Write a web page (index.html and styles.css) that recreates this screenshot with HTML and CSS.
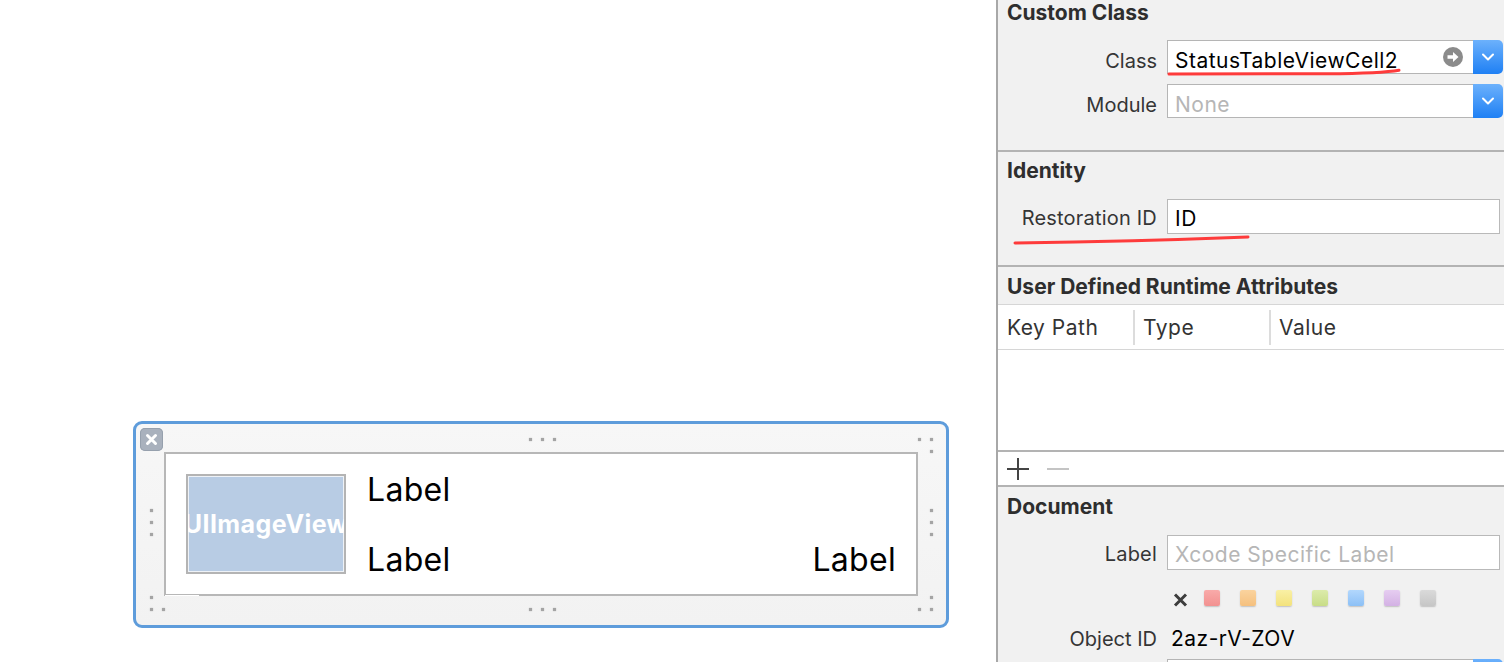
FILE: index.html
```html
<!DOCTYPE html>
<html>
<head>
<meta charset="utf-8">
<title>Xcode Identity Inspector</title>
<link rel="stylesheet" href="styles.css">
</head>
<body>
<div class="app">
  <main class="canvas">
    <div class="cell">
      <div class="close-btn">
        <svg width="23" height="23" viewBox="0 0 23 23"><path d="M7.5 7.5 L15.5 15.5 M15.5 7.5 L7.5 15.5" stroke="#fff" stroke-width="3" stroke-linecap="round"/></svg>
      </div>
      <div class="handle h-row h-top"><i></i><i></i><i></i></div>
      <div class="handle h-row h-bottom"><i></i><i></i><i></i></div>
      <div class="handle h-col h-left"><i></i><i></i><i></i></div>
      <div class="handle h-col h-right"><i></i><i></i><i></i></div>
      <div class="handle h-grid c-tr"><i></i><i></i><i class="off"></i><i></i></div>
      <div class="handle h-grid c-br"><i class="off"></i><i></i><i></i><i></i></div>
      <div class="handle h-grid c-bl"><i></i><i class="off"></i><i></i><i></i></div>
      <div class="content-view">
        <div class="image-view"><span>UIImageView</span></div>
        <div class="labels">
          <span class="lbl">Label</span><span></span>
          <span class="lbl">Label</span><span class="lbl lbl-right">Label</span>
        </div>
      </div>
    </div>
  </main>
  <div class="divider"></div>
  <aside class="inspector">
    <section class="sec sec-custom">
      <h2 class="sec-title">Custom Class</h2>
      <div class="row row-popup row-first">
        <span class="row-label">Class</span>
        <div class="popup">
          <div class="popup-field">
            <span class="val">StatusTableViewCell2</span>
            <svg class="go-icon" width="20" height="20" viewBox="0 0 20 20"><circle cx="10" cy="10" r="10" fill="#8b8b8b"/><path d="M4.5 8.3 H10 V5 L15.5 10 L10 15 V11.7 H4.5 Z" fill="#fff"/></svg>
          </div>
          <div class="popup-btn"><svg width="12" height="8" viewBox="0 0 12 8"><path d="M1 1.5 L6 6.5 L11 1.5" fill="none" stroke="#fff" stroke-width="2" stroke-linecap="round" stroke-linejoin="round"/></svg></div>
        </div>
      </div>
      <div class="row row-popup row-next">
        <span class="row-label">Module</span>
        <div class="popup">
          <div class="popup-field"><span class="placeholder">None</span></div>
          <div class="popup-btn"><svg width="12" height="8" viewBox="0 0 12 8"><path d="M1 1.5 L6 6.5 L11 1.5" fill="none" stroke="#fff" stroke-width="2" stroke-linecap="round" stroke-linejoin="round"/></svg></div>
        </div>
      </div>
      <svg class="mark mark-class" width="240" height="10" viewBox="0 0 240 10"><path d="M2 6 L160 5.8 Q215 5.2 232 2.2" fill="none" stroke="#fe3b3b" stroke-width="3" stroke-linecap="round"/></svg>
    </section>

    <section class="sec sec-identity">
      <h2 class="sec-title">Identity</h2>
      <div class="row row-text row-first-id">
        <span class="row-label">Restoration ID</span>
        <div class="textfield"><span class="val">ID</span></div>
      </div>
      <svg class="mark mark-id" width="240" height="12" viewBox="0 0 240 12"><path d="M2 9 Q120 7.5 235 3" fill="none" stroke="#fe3b3b" stroke-width="3" stroke-linecap="round"/></svg>
    </section>

    <section class="sec sec-udra">
      <div class="udra-head"><h2 class="sec-title">User Defined Runtime Attributes</h2></div>
      <div class="table-head">
        <div class="th">Key Path</div>
        <div class="th">Type</div>
        <div class="th">Value</div>
      </div>
      <div class="table-body"></div>
      <div class="table-bar">
        <svg width="22" height="22" viewBox="0 0 22 22"><path d="M11 0 V22 M0 11 H22" stroke="#444" stroke-width="2"/></svg>
        <svg width="22" height="22" viewBox="0 0 22 22"><path d="M0 11 H22" stroke="#c4c4c4" stroke-width="2"/></svg>
      </div>
    </section>

    <section class="sec sec-doc">
      <h2 class="sec-title">Document</h2>
      <div class="row row-text row-first-id">
        <span class="row-label">Label</span>
        <div class="textfield"><span class="placeholder">Xcode Specific Label</span></div>
      </div>
      <div class="row row-swatch">
        <span></span>
        <div class="swatches">
          <svg class="swatch-x" width="15" height="14" viewBox="0 0 15 14"><path d="M2 1.5 L13 12.5 M13 1.5 L2 12.5" stroke="#3d3d3d" stroke-width="3"/></svg>
          <i class="sw sw-red"></i>
          <i class="sw sw-orange"></i>
          <i class="sw sw-yellow"></i>
          <i class="sw sw-green"></i>
          <i class="sw sw-blue"></i>
          <i class="sw sw-purple"></i>
          <i class="sw sw-gray"></i>
        </div>
      </div>
      <div class="row row-obj">
        <span class="row-label">Object ID</span>
        <span class="obj-val">2az-rV-ZOV</span>
      </div>
      <div class="row row-lock">
        <span></span>
        <div class="popup">
          <div class="popup-field"></div>
          <div class="popup-btn"></div>
        </div>
      </div>
    </section>
  </aside>
</div>
</body>
</html>
```

FILE: styles.css
```css
* { box-sizing: border-box; margin: 0; padding: 0; }

html, body {
  width: 1504px;
  height: 662px;
  overflow: hidden;
  background: #ffffff;
  font-family: "Inter", "Liberation Sans", sans-serif;
}

.app {
  display: flex;
  width: 1504px;
  height: 662px;
}

/* ---------- canvas ---------- */
.canvas {
  width: 996px;
  flex: none;
  background: #ffffff;
  padding: 421px 0 0 133px;
}

.cell {
  position: relative;
  width: 816px;
  height: 207px;
  border: 3px solid #5e9cdb;
  border-radius: 9px;
  background: linear-gradient(#f7f7f7, #f2f2f2);
  padding: 28px 28px 29px 28px;
}

.close-btn {
  position: absolute;
  left: 4px;
  top: 4px;
  width: 23px;
  height: 23px;
  border-radius: 5px;
  background: #a9b1bd;
  box-shadow: inset 0 0 0 1px #96a0ad;
  display: flex;
}

.handle { position: absolute; display: flex; gap: 9px; }
.handle i {
  display: block;
  width: 3px;
  height: 3px;
  background: #a4a4a4;
  box-shadow: 0 0 1.5px rgba(0,0,0,0.25);
}
.handle i.off { visibility: hidden; }
.h-row { flex-direction: row; }
.h-col { flex-direction: column; }
.h-grid { display: grid; grid-template-columns: 3px 3px; gap: 9px; }

.h-top { left: 393px; top: 14px; }
.h-bottom { left: 393px; top: 184px; }
.h-left { left: 14px; top: 85px; }
.h-right { left: 794px; top: 85px; }
.c-tr { left: 782px; top: 14px; }
.c-br { left: 782px; top: 172px; }
.c-bl { left: 14px; top: 172px; }

.content-view {
  position: relative;
  width: 100%;
  height: 100%;
  background: #ffffff;
  border: 2px solid #b7b7b7;
  display: flex;
  align-items: flex-start;
  padding: 16px 21px 0 20px;
}
.content-view::after {
  content: "";
  position: absolute;
  left: -1px;
  bottom: -2px;
  width: 34px;
  height: 1px;
  background: #ffffff;
}

.image-view {
  flex: none;
  margin-top: 4px;
  width: 160px;
  height: 100px;
  border: 2px solid #b4b4b4;
  box-shadow: inset 0 0 0 1px #eef2f7;
  background: #b8cce4;
  overflow: hidden;
  display: flex;
  align-items: center;
  justify-content: center;
}
.image-view span {
  color: #ffffff;
  font-weight: 700;
  font-size: 25px;
  letter-spacing: 0.4px;
  white-space: nowrap;
}

.labels {
  flex: 1;
  margin-left: 21px;
  display: grid;
  grid-template-columns: 1fr auto;
  row-gap: 30px;
  line-height: 40px;
}
.lbl {
  font-size: 32px;
  color: #000000;
  letter-spacing: 0.3px;
}
.lbl-right { margin-right: -1px; }

.divider {
  width: 2px;
  flex: none;
  background: #a8a8a8;
}

/* ---------- inspector ---------- */
.inspector {
  position: relative;
  flex: 1;
  background: #f1f1f1;
  color: #333333;
}

.sec {
  position: relative;
  border-bottom: 2px solid #b3b3b3;
}

.sec-title {
  font-size: 21px;
  font-weight: 700;
  line-height: 26px;
  color: #2e2e2e;
  padding-left: 9px;
}

.sec-custom { height: 152px; }
.sec-identity { height: 115px; padding-top: 6px; }
.sec-udra { height: 220px; }
.sec-doc { border-bottom: none; padding-top: 7px; height: 175px; }

.row {
  display: grid;
  grid-template-columns: 159px 1fr;
  column-gap: 10px;
  align-items: center;
}
.row-label {
  text-align: right;
  font-size: 20px;
  color: #353535;
}
.row-text .row-label { letter-spacing: 0.2px; }
.row-popup .row-label,
.row-popup .popup-field > span { margin-top: 7px; }
.row-text .row-label,
.row-text .textfield > span { margin-top: 3px; }

.row-first { margin-top: 14px; height: 34px; margin-right: 1px; }
.row-next { margin-top: 10px; height: 34px; margin-right: 1px; }
.row-first-id { margin-top: 15px; height: 35px; margin-right: 4px; }
.row-swatch { margin-top: 18px; height: 16px; }
.row-obj { margin-top: 20px; height: 28px; }
.row-obj .row-label { margin-top: 1px; }
.row-lock { margin-top: 7px; height: 34px; margin-right: 1px; }

.popup {
  display: flex;
  height: 100%;
}
.popup-field {
  flex: 1;
  display: flex;
  align-items: center;
  justify-content: space-between;
  background: #ffffff;
  border: 1px solid #b5b5b5;
  border-right: none;
  padding: 0 10px 0 7px;
}
.popup-btn {
  width: 30px;
  flex: none;
  border-radius: 0 5px 5px 0;
  background: linear-gradient(#6cb1fc, #1f80f4);
  display: flex;
  align-items: center;
  justify-content: center;
}

.textfield {
  height: 100%;
  background: #ffffff;
  border: 1px solid #b9b9b9;
  display: flex;
  align-items: center;
  padding-left: 7px;
}

.val { font-size: 21px; letter-spacing: 0.5px; color: #000000; }
.placeholder { font-size: 21px; letter-spacing: 0.5px; color: #b6b6b6; }

.mark { position: absolute; }
.mark-class { left: 169px; top: 68px; }
.mark-id { left: 15px; top: 82px; }

.udra-head {
  height: 38px;
  padding-top: 7px;
  border-bottom: 1px solid #d6d6d6;
}
.table-head {
  height: 45px;
  background: #ffffff;
  border-bottom: 1px solid #d6d6d6;
  display: grid;
  grid-template-columns: 135px 136px 1fr;
  align-items: center;
}
.th {
  font-size: 21px;
  letter-spacing: 0.5px;
  color: #333333;
  line-height: 35px;
  padding-left: 9px;
}
.th + .th { border-left: 2px solid #dcdcdc; padding-left: 8px; }
.table-body {
  height: 102px;
  background: #ffffff;
  border-bottom: 2px solid #b3b3b3;
}
.table-bar {
  height: 33px;
  background: #ffffff;
  display: flex;
  align-items: center;
  gap: 18px;
  padding-left: 9px;
}

.swatches {
  display: flex;
  align-items: center;
  gap: 20px;
  padding-left: 6px;
}
.swatch-x { margin-top: 5px; margin-right: -4px; flex: none; }
.sw {
  display: block;
  width: 16px;
  height: 16px;
  border-radius: 2px;
  box-shadow: 0 1px 1.5px rgba(0,0,0,0.2);
}
.sw-red { background: linear-gradient(#f9aaa9, #f29190); }
.sw-orange { background: linear-gradient(#fad39e, #f5c07e); }
.sw-yellow { background: linear-gradient(#f9f0a5, #f3e27c); }
.sw-green { background: linear-gradient(#dcebab, #c8dd87); }
.sw-blue { background: linear-gradient(#b2d7fd, #8cc0f6); }
.sw-purple { background: linear-gradient(#e6cdf1, #d3b1e4); }
.sw-gray { background: linear-gradient(#dadada, #c6c6c6); }

.obj-val {
  font-size: 21px;
  letter-spacing: 0.5px;
  color: #000000;
  padding-left: 4px;
  margin-top: 1px;
}
```
